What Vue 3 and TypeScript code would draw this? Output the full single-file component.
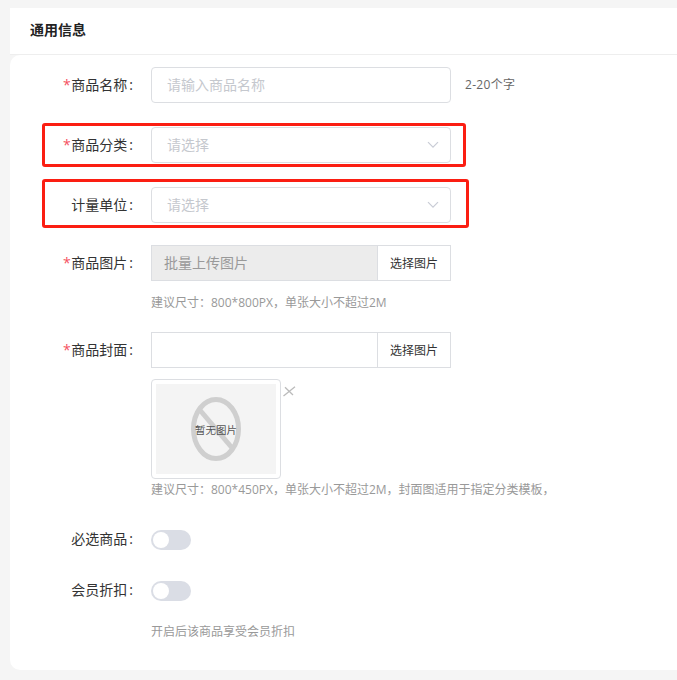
<script setup lang="ts">
</script>

<template>
  <div class="page">
    <div class="panel">
      <div class="head">通用信息</div>
      <div class="card">
        <div class="row r1">
          <label class="lab"><i>*</i>商品名称<b>:</b></label>
          <div class="input ph">请输入商品名称</div>
          <span class="side">2-20个字</span>
        </div>
        <div class="row r2">
          <label class="lab"><i>*</i>商品分类<b>:</b></label>
          <div class="input ph sel">请选择
            <svg class="chev" width="12" height="8" viewBox="0 0 12 8"><path d="M1 1.2 6 6.2 11 1.2" fill="none" stroke="#c9ccd6" stroke-width="1.2" /></svg>
          </div>
        </div>
        <div class="row r3">
          <label class="lab">计量单位<b>:</b></label>
          <div class="input ph sel">请选择
            <svg class="chev" width="12" height="8" viewBox="0 0 12 8"><path d="M1 1.2 6 6.2 11 1.2" fill="none" stroke="#c9ccd6" stroke-width="1.2" /></svg>
          </div>
        </div>
        <div class="row r4">
          <label class="lab"><i>*</i>商品图片<b>:</b></label>
          <div class="group">
            <div class="gin dis">批量上传图片</div>
            <div class="gbtn">选择图片</div>
          </div>
        </div>
        <div class="hint h1">建议尺寸：800*800PX，单张大小不超过2M</div>
        <div class="row r5">
          <label class="lab"><i>*</i>商品封面<b>:</b></label>
          <div class="group">
            <div class="gin"></div>
            <div class="gbtn">选择图片</div>
          </div>
        </div>
        <div class="thumbrow">
          <div class="thumb">
            <div class="noimg">
              <svg class="ring" width="52" height="66" viewBox="0 0 52 66">
                <ellipse cx="26" cy="33" rx="22.5" ry="29.5" fill="none" stroke="#cfcfcf" stroke-width="5" />
                <path d="M9 13 43 53" stroke="#cfcfcf" stroke-width="5" />
              </svg>
              <span class="notext">暂无图片</span>
            </div>
          </div>
          <svg class="close" width="14" height="14" viewBox="0 0 14 14"><path d="M0.5 11 12 1.7M2 2.3 10 10" fill="none" stroke="#bbb" stroke-width="1.3" /></svg>
        </div>
        <div class="hint h2">建议尺寸：800*450PX，单张大小不超过2M，封面图适用于指定分类模板，</div>
        <div class="row r6">
          <label class="lab">必选商品<b>:</b></label>
          <div class="switch"><span class="knob"></span></div>
        </div>
        <div class="row r7">
          <label class="lab">会员折扣<b>:</b></label>
          <div class="switch"><span class="knob"></span></div>
        </div>
        <div class="hint h3">开启后该商品享受会员折扣</div>
      </div>
    </div>
    <div class="mark m1"></div>
    <div class="mark m2"></div>
  </div>
</template>

<style>
html, body { margin: 0; background: #f5f5f5; }
</style>

<style scoped>
.page {
  position: relative;
  width: 677px;
  height: 680px;
  overflow: hidden;
  background: #f5f5f5;
  box-sizing: border-box;
  padding: 8px 0 0 10px;
  font-family: "Open Sans", "Noto Sans CJK SC", sans-serif;
  font-size: 14px;
  color: #333;
}
.panel { width: 690px; }
.head {
  height: 47px;
  line-height: 44px;
  box-sizing: border-box;
  padding-left: 20px;
  background: #fff;
  border-bottom: 1px solid #eee;
  font-size: 14px;
  font-weight: 600;
  color: #222;
}
.card {
  height: 615px;
  box-sizing: border-box;
  background: #fff;
  border-radius: 10px;
  padding-top: 12px;
}
.row { display: flex; align-items: center; }
.lab {
  width: 123px;
  flex: none;
  margin-right: 18px;
  text-align: right;
  line-height: 36px;
  color: #333;
}
.lab i { font-style: normal; color: #f5515f; margin-right: 0.5px; }
.lab b { font-weight: 400; margin-left: 2px; }
.input {
  position: relative;
  width: 300px;
  height: 36px;
  box-sizing: border-box;
  border: 1px solid #dcdee2;
  border-radius: 4px;
  padding-left: 15px;
  line-height: 34px;
}
.ph { color: #c5c8ce; }
.chev { position: absolute; right: 11px; top: 13px; }
.side { margin-left: 14px; font-size: 12px; letter-spacing: 0.3px; color: #666; padding-bottom: 2px; }
.r2 { margin-top: 24px; }
.r3 { margin-top: 24px; }
.r4 { margin-top: 22px; }
.group {
  display: flex;
  width: 300px;
  height: 36px;
  box-sizing: border-box;
  border: 1px solid #dcdee2;
}
.gin { flex: 1; line-height: 34px; padding-left: 12px; }
.dis { background: #ececec; color: #999; }
.gbtn {
  width: 72px;
  flex: none;
  border-left: 1px solid #dcdee2;
  text-align: center;
  line-height: 36px;
  font-size: 12px;
  color: #333;
}
.hint { margin-left: 141px; font-size: 12px; line-height: 18px; color: #999; }
.h1 { margin-top: 13px; }
.r5 { margin-top: 20px; }
.thumbrow { display: flex; margin: 11px 0 0 141px; }
.thumb {
  width: 130px;
  height: 100px;
  box-sizing: border-box;
  border: 1px solid #dcdee2;
  border-radius: 4px;
  padding: 4px;
}
.noimg {
  position: relative;
  height: 90px;
  background: #f4f4f4;
  display: flex;
  align-items: center;
  justify-content: center;
}
.ring { position: absolute; left: 34px; top: 12px; }
.notext { position: relative; font-size: 10.5px; color: #555; }
.close { margin: 6px 0 0 2px; }
.h2 { margin-top: 2px; }
.r6 { margin-top: 23px; height: 36px; }
.r6 .lab { line-height: 34px; padding-bottom: 2px; }
.r7 { margin-top: 15px; height: 36px; }
.r7 .lab { line-height: 34px; padding-bottom: 2px; }
.switch {
  position: relative;
  width: 40px;
  height: 20px;
  border-radius: 10px;
  background: #dadde5;
}
.knob {
  position: absolute;
  left: 2px;
  top: 2px;
  width: 16px;
  height: 16px;
  border-radius: 50%;
  background: #fff;
}
.h3 { margin-top: 14px; }
.mark {
  position: absolute;
  box-sizing: border-box;
  border: 3px solid #fb1e12;
  border-radius: 3px;
}
.m1 { left: 42px; top: 123px; width: 424px; height: 44px; }
.m2 { left: 42px; top: 179px; width: 427px; height: 49px; }
</style>
